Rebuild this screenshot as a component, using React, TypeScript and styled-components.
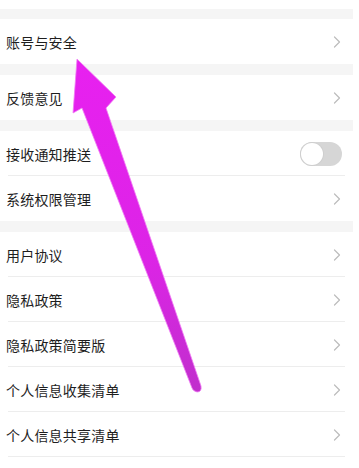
import styled, { createGlobalStyle } from "styled-components";

const GlobalStyle = createGlobalStyle`
  html, body {
    margin: 0;
    padding: 0;
    background: #ffffff;
  }
  body {
    font-family: "Noto Sans CJK SC", "Noto Sans", sans-serif;
  }
`;

type Item = { label: string; toggle?: boolean };

const groups: Item[][] = [
  [{ label: "账号与安全" }],
  [{ label: "反馈意见" }],
  [{ label: "接收通知推送", toggle: true }, { label: "系统权限管理" }],
  [
    { label: "用户协议" },
    { label: "隐私政策" },
    { label: "隐私政策简要版" },
    { label: "个人信息收集清单" },
    { label: "个人信息共享清单" },
  ],
];

const Page = styled.div`
  position: relative;
  width: 359px;
  height: 468px;
  overflow: hidden;
  background: #ffffff;
`;

const List = styled.div`
  width: 353px;
  padding-top: 9px;
  display: flex;
  flex-direction: column;
`;

const Gap = styled.div<{ $h: number }>`
  height: ${(p) => p.$h}px;
  background: #f5f5f5;
`;

const Group = styled.div`
  background: #ffffff;
  display: flex;
  flex-direction: column;
`;

const Row = styled.div<{ $divider: boolean }>`
  height: 45px;
  box-sizing: border-box;
  display: flex;
  align-items: center;
  justify-content: space-between;
  padding: 0 12px 0 6px;
  position: relative;

  &::after {
    content: "";
    display: ${(p) => (p.$divider ? "block" : "none")};
    position: absolute;
    left: 8px;
    right: 8px;
    bottom: 0;
    height: 1px;
    background: #ededed;
  }
`;

const Label = styled.span`
  font-size: 14px;
  color: #1e1e1e;
  letter-spacing: 0.2px;
`;

const Switch = styled.div`
  width: 42px;
  height: 24px;
  border-radius: 12px;
  background: #d6d6d6;
  margin-right: -1px;
  display: flex;
  align-items: center;
  padding: 0 1px;
  box-sizing: border-box;
`;

const Knob = styled.div`
  width: 22px;
  height: 22px;
  border-radius: 50%;
  background: #ffffff;
  box-shadow: 0 0 0 1px #cfcfcf;
`;

const Overlay = styled.svg`
  position: absolute;
  left: 0;
  top: 0;
  pointer-events: none;
`;

const Chevron = () => (
  <svg width="8" height="12" viewBox="0 0 8 12">
    <polyline
      points="1.5,1 6.5,6 1.5,11"
      fill="none"
      stroke="#bcbcbc"
      strokeWidth="1.2"
      strokeLinecap="round"
      strokeLinejoin="round"
    />
  </svg>
);

const gapSizes = [10, 11, 11, 11];

export default function App() {
  return (
    <>
      <GlobalStyle />
      <Page>
        <List>
          {groups.map((g, gi) => (
            <div key={gi}>
              <Gap $h={gapSizes[gi]} />
              <Group>
                {g.map((item, i) => (
                  <Row
                    key={item.label}
                    $divider={i < g.length - 1 || gi === groups.length - 1}
                  >
                    <Label>{item.label}</Label>
                    {item.toggle ? (
                      <Switch>
                        <Knob />
                      </Switch>
                    ) : (
                      <Chevron />
                    )}
                  </Row>
                ))}
              </Group>
            </div>
          ))}
        </List>
        <Overlay width="359" height="468" viewBox="0 0 359 468">
          <defs>
            <linearGradient id="arrowFill" x1="0" y1="0" x2="0" y2="1">
              <stop offset="0" stopColor="#e820f0" />
              <stop offset="0.6" stopColor="#dc24e6" />
              <stop offset="1" stopColor="#c02fcc" />
            </linearGradient>
          </defs>
          <path
            d="M77 59 L116 97 L106 108 L201 386 Q202 392 197 392 Q193 391 192 388 L82 108 L73 113 Z"
            fill="url(#arrowFill)"
            stroke="#f07cf4"
            strokeWidth="0.8"
            strokeLinejoin="round"
          />
        </Overlay>
      </Page>
    </>
  );
}
